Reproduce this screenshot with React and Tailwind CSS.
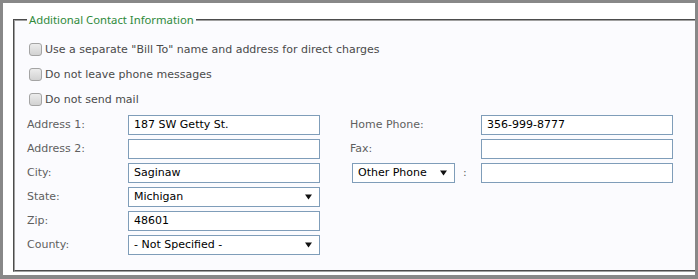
const labelCls = 'w-[101px] shrink-0 text-[#5f5f5f]';
const fieldCls =
  'flex h-[20px] w-[192px] shrink-0 items-center border border-[#7f9db9] bg-white px-[5px] text-black';

function Checkbox({ label }) {
  return (
    <div className="flex h-[25px] items-center pl-[2px]">
      <span className="mr-[3px] h-[13px] w-[13px] shrink-0 rounded-[3px] border border-[#a4a4a4] bg-gradient-to-b from-[#ececec] to-[#d2d2d2]" />
      <span className="text-[#4a4a4a]">{label}</span>
    </div>
  );
}

function TextBox({ value }) {
  return <div className={fieldCls}>{value}</div>;
}

function Arrow() {
  return (
    <svg width="7" height="6" viewBox="0 0 7 6" className="ml-auto mr-[2px] shrink-0">
      <path d="M0 0.5 H7 L3.5 5.5 Z" fill="#111" />
    </svg>
  );
}

function Select({ value, className = 'w-[192px]' }) {
  return (
    <div
      className={`flex h-[20px] shrink-0 items-center border border-[#7f9db9] bg-white px-[5px] text-black ${className}`}
    >
      <span>{value}</span>
      <Arrow />
    </div>
  );
}

function Row({ left, leftField, right, rightField }) {
  return (
    <div className="flex h-[20px] items-center">
      <span className={labelCls}>{left}</span>
      {leftField}
      {right !== undefined && (
        <>
          <span className="w-[30px] shrink-0" />
          <div className="flex w-[131px] shrink-0 items-center text-[#5f5f5f]">{right}</div>
          {rightField}
        </>
      )}
    </div>
  );
}

export default function App() {
  return (
    <div
      className="h-[279px] w-[698px] bg-[#888888] pt-[3px] pr-[3px] pb-[4px] pl-[3px] text-[11px] leading-[14px]"
      style={{ fontFamily: '"DejaVu Sans", Verdana, sans-serif' }}
    >
      <div className="flex h-full flex-col bg-white pt-[9px] pb-[3px] pl-[10px]">
        <fieldset className="flex-1 border-2 border-r-0 border-[#a0a0a0] bg-[#fbfbfe] pt-[9px] pl-[12px] [border-style:groove]">
          <legend
            className="px-[2px] text-[11.3px] leading-[16px] text-[#2f8a3a]"
            style={{ fontFamily: '"Noto Sans", "Open Sans", sans-serif' }}
          >
            Additional Contact Information
          </legend>

          <Checkbox label={'Use a separate "Bill To" name and address for direct charges'} />
          <Checkbox label="Do not leave phone messages" />
          <Checkbox label="Do not send mail" />

          <div className="mt-[3px] flex flex-col gap-[4px]">
            <Row
              left="Address 1:"
              leftField={<TextBox value="187 SW Getty St." />}
              right="Home Phone:"
              rightField={<TextBox value="356-999-8777" />}
            />
            <Row
              left="Address 2:"
              leftField={<TextBox value="" />}
              right="Fax:"
              rightField={<TextBox value="" />}
            />
            <Row
              left="City:"
              leftField={<TextBox value="Saginaw" />}
              right={
                <>
                  <Select value="Other Phone" className="ml-[2px] w-[103px]" />
                  <span className="ml-[8px]">:</span>
                </>
              }
              rightField={<TextBox value="" />}
            />
            <Row left="State:" leftField={<Select value="Michigan" />} />
            <Row left="Zip:" leftField={<TextBox value="48601" />} />
            <Row left="County:" leftField={<Select value="- Not Specified -" />} />
          </div>
        </fieldset>
      </div>
    </div>
  );
}
